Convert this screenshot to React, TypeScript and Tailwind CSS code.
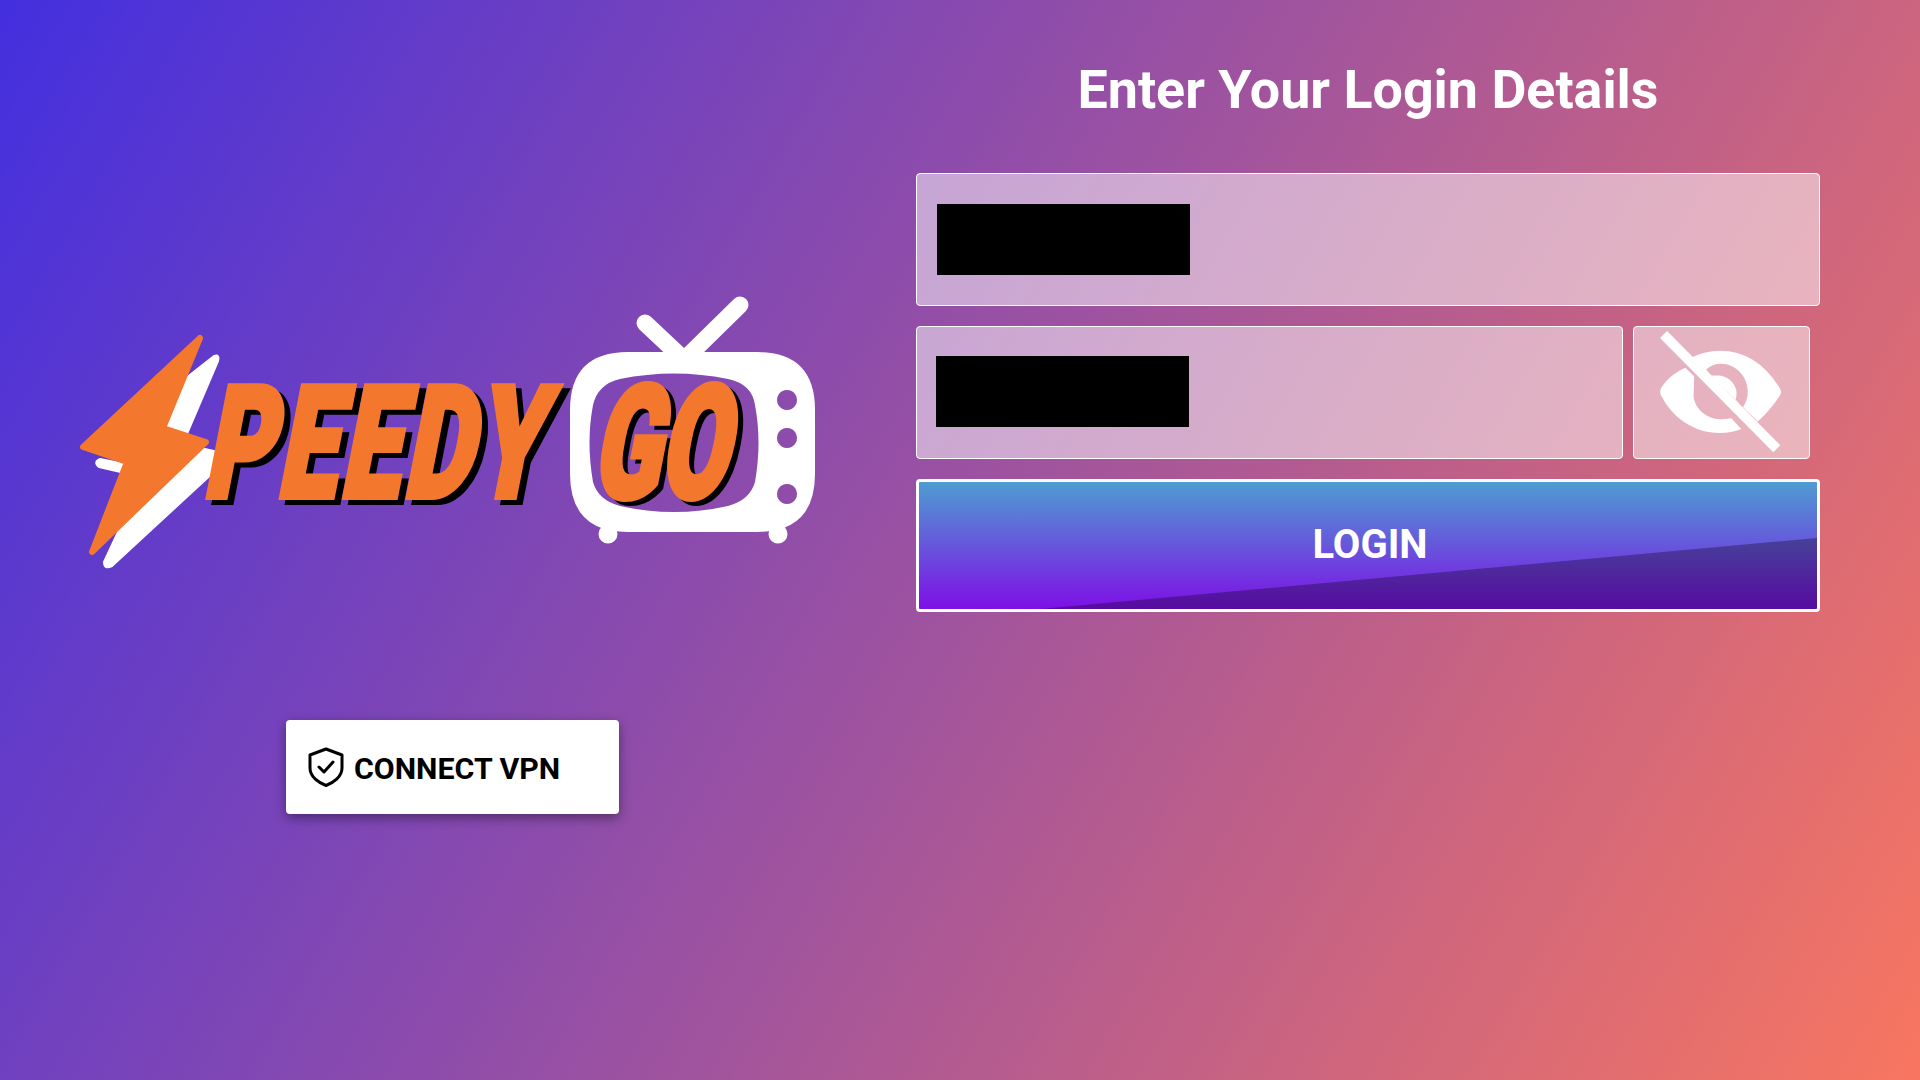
import { useState } from "react";

function Logo() {
  return (
    <svg viewBox="70 290 760 290" className="block h-[290px] w-[760px] blur-[0.4px]">
      {/* white bolt behind */}
      <g fill="#fff" stroke="#fff" strokeWidth="2" strokeLinejoin="round">
        <path d="M214 356 Q220 354 218 361 L186 436 L160 430 L186 378 Z" />
        <path d="M214 451 L216 470 L112 566 Q104 570 104 562 L118 532 L200 448 Z" />
        <path d="M100 459 L130 465 L125 473 L99 467 Q93 462 100 459 Z" />
      </g>
      {/* orange bolt */}
      <path
        d="M200 338 L163 428 L206 442 L92 552 L127 462 L83 447 Z"
        fill="#f4772e"
        stroke="#f4772e"
        strokeWidth="6"
        strokeLinejoin="round"
      />
      <g className="drop-shadow-[6px_5px_0_#000]">
        <text
          transform="translate(202 497) skewX(-11) scale(0.68 1)"
          fontFamily="Roboto, sans-serif"
          fontWeight="900"
          fontSize="156"
          letterSpacing="6"
          fill="#f4772e"
          stroke="#f4772e"
          strokeWidth="6"
        >
          PEEDY
        </text>
      </g>
      {/* tv */}
      <path d="M645 323 L678 354" stroke="#fff" strokeWidth="17" strokeLinecap="round" />
      <path d="M740 305 L690 354" stroke="#fff" strokeWidth="17" strokeLinecap="round" />
      <circle cx="608" cy="534" r="9.5" fill="#fff" />
      <circle cx="778" cy="534" r="9.5" fill="#fff" />
      <path
        fillRule="evenodd"
        fill="#fff"
        d="M628 352 H757 Q815 352 815 410 V474 Q815 532 757 532 H628 Q570 532 570 474 V410 Q570 352 628 352 Z M620 379 Q674 368 728 379 Q752 384 755 405 Q762 442 755 482 Q750 500 728 506 Q674 518 620 506 Q598 500 593 482 Q586 442 593 405 Q598 384 620 379 Z M787 390 a10 10 0 1 0 .01 0 Z M787 428 a10 10 0 1 0 .01 0 Z M787 484 a10 10 0 1 0 .01 0 Z"
      />
      <g className="drop-shadow-[5px_4px_0_#000]">
        <text
          transform="translate(591 497) skewX(-11) scale(0.63 1)"
          fontFamily="Roboto, sans-serif"
          fontWeight="900"
          fontSize="156"
          fill="#f4772e"
          stroke="#f4772e"
          strokeWidth="7"
        >
          GO
        </text>
      </g>
    </svg>
  );
}

function ShieldIcon() {
  return (
    <svg viewBox="0 0 36 40" className="h-10 w-9 shrink-0" fill="none" stroke="#000" strokeWidth="3">
      <path d="M18 2 L34 8 V21 C34 30 25 36 18 38.5 C11 36 2 30 2 21 V8 Z" strokeLinejoin="round" />
      <path d="M11 20 L16 25 L25 15" strokeLinecap="round" strokeLinejoin="round" />
    </svg>
  );
}

function EyeOffIcon() {
  return (
    <svg viewBox="160 48 530 398" className="h-full w-full" fill="#fff">
      <path
        fillRule="evenodd"
        d="M335 140 Q375 120 420 120 Q530 120 600 230 Q612 245 600 260 Q570 305 535 335 Z M378 178 Q398 160 422 160 C470 160 505 200 505 245 Q505 270 490 292 L468 268 Q472 255 470 240 C465 215 440 195 415 195 Q400 195 395 195 Z"
      />
      <path d="M315 172 L342 198 L340 260 C345 300 385 330 425 328 Q440 328 455 325 L485 358 Q455 370 420 370 C340 370 275 320 245 262 Q232 245 245 228 Q270 192 315 172 Z" />
      <path d="M249 71 L593 418" stroke="#fff" strokeWidth="30" />
    </svg>
  );
}

export default function App() {
  const [showPassword, setShowPassword] = useState(false);

  return (
    <div className="flex h-screen w-screen overflow-hidden bg-[linear-gradient(120deg,#432fdf_0%,#f87660_100%)] font-['Roboto',sans-serif]">
      {/* Left side */}
      <div className="flex w-[916px] shrink-0 flex-col pt-[290px]">
        <div className="ml-[70px]">
          <Logo />
        </div>
        <button className="ml-[286px] mt-[140px] flex h-[94px] w-[333px] items-center gap-[10px] rounded-[4px] bg-white pl-[22px] text-[30.3px] font-bold text-black shadow-[0_4px_12px_rgba(0,0,0,0.4)]">
          <ShieldIcon />
          <span className="pt-[4px]">CONNECT VPN</span>
        </button>
      </div>

      {/* Login form */}
      <div className="flex w-[904px] shrink-0 flex-col">
        <h1 className="mt-[60px] h-[60px] text-center text-[53.8px] font-bold leading-[60px] text-white">
          Enter Your Login Details
        </h1>
        <div className="mt-[53px] flex h-[133px] items-center rounded-[4px] border-[1.5px] border-white bg-white/50 pl-[20px]">
          <div className="h-[71px] w-[253px] bg-black" />
        </div>
        <div className="mt-[20px] flex gap-[10px]">
          <div className="flex h-[133px] w-[707px] items-center rounded-[4px] border-[1.5px] border-white bg-white/50 pb-[2px] pl-[19px]">
            <div className="h-[71px] w-[253px] bg-black" />
          </div>
          <button
            onClick={() => setShowPassword(!showPassword)}
            aria-label="Toggle password"
            className="h-[133px] w-[177px] rounded-[4px] border-[1.5px] border-white bg-white/50"
          >
            <EyeOffIcon />
          </button>
        </div>
        <button className="relative mt-[20px] flex h-[133px] items-center justify-center overflow-hidden rounded-[4px] border-[3px] border-white bg-[linear-gradient(180deg,#4f9cd2_0%,#7e10e6_100%)] pb-[2px] pl-[4px] text-[40px] font-bold text-white">
          <span className="absolute inset-0 bg-black/30 [clip-path:polygon(13.5%_100%,100%_44%,100%_100%)]" />
          <span className="relative">LOGIN</span>
        </button>
      </div>
    </div>
  );
}
